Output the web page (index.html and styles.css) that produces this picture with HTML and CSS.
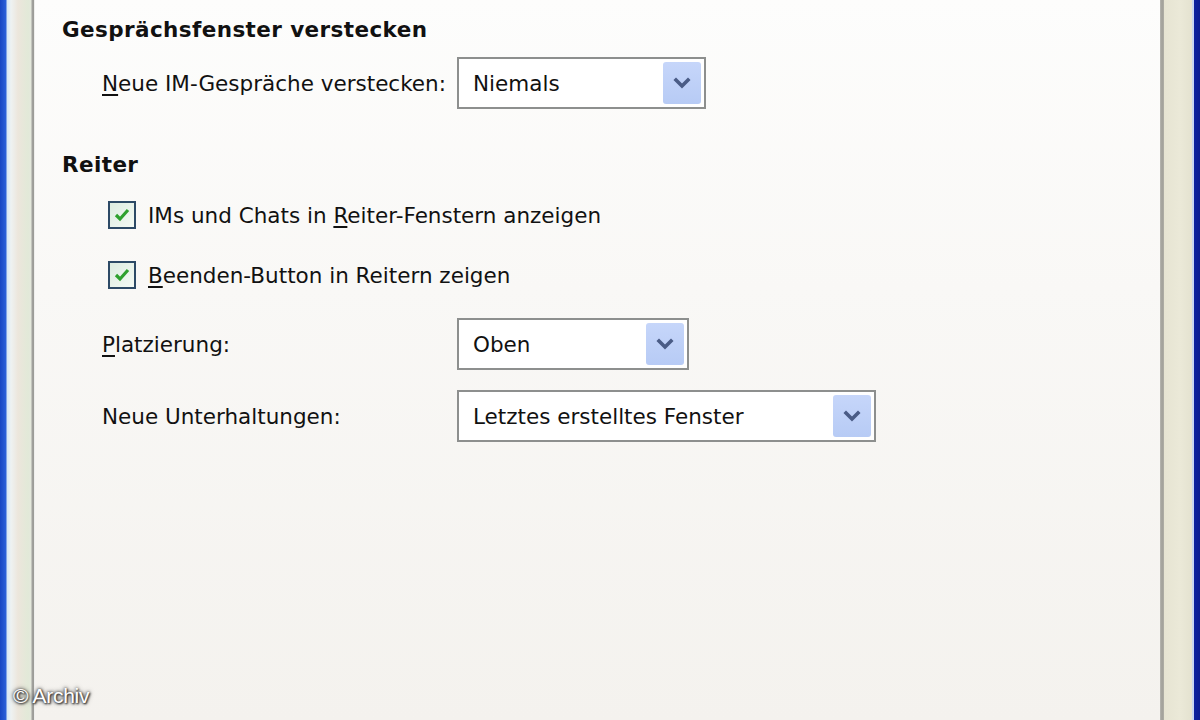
FILE: index.html
```html
<!DOCTYPE html>
<html lang="de">
<head>
<meta charset="utf-8">
<title>Einstellungen</title>
<link rel="stylesheet" href="styles.css">
</head>
<body>
<div class="window">
  <div class="frame-left"></div>
  <div class="panel">
    <div class="heading first">Gesprächsfenster verstecken</div>
    <div class="field row-hide">
      <span class="label"><u>N</u>eue IM-Gespräche verstecken:</span>
      <div class="select w-niemals"><span class="value">Niemals</span><span class="arrow"><svg width="18" height="12" viewBox="0 0 18 12"><path d="M3 3 L9 9 L15 3" fill="none" stroke="#4a5c86" stroke-width="3.6" stroke-linecap="square"/></svg></span></div>
    </div>
    <div class="heading second">Reiter</div>
    <label class="check row-c1"><span class="box"><svg width="18" height="16" viewBox="0 0 18 16"><path d="M3 8 L7 12 L15 3" fill="none" stroke="#2ea12e" stroke-width="3.2"/></svg></span><span>IMs und Chats in <u>R</u>eiter-Fenstern anzeigen</span></label>
    <label class="check row-c2"><span class="box"><svg width="18" height="16" viewBox="0 0 18 16"><path d="M3 8 L7 12 L15 3" fill="none" stroke="#2ea12e" stroke-width="3.2"/></svg></span><span><u>B</u>eenden-Button in Reitern zeigen</span></label>
    <div class="field row-place">
      <span class="label"><u>P</u>latzierung:</span>
      <div class="select w-oben"><span class="value">Oben</span><span class="arrow"><svg width="18" height="12" viewBox="0 0 18 12"><path d="M3 3 L9 9 L15 3" fill="none" stroke="#4a5c86" stroke-width="3.6" stroke-linecap="square"/></svg></span></div>
    </div>
    <div class="field row-new">
      <span class="label">Neue Unterhaltungen:</span>
      <div class="select w-fenster"><span class="value">Letztes erstelltes Fenster</span><span class="arrow"><svg width="18" height="12" viewBox="0 0 18 12"><path d="M3 3 L9 9 L15 3" fill="none" stroke="#4a5c86" stroke-width="3.6" stroke-linecap="square"/></svg></span></div>
    </div>
  </div>
  <div class="frame-right"></div>
  <div class="watermark">© Archiv</div>
</div>
</body>
</html>
```
FILE: styles.css
```css
html, body {
  margin: 0;
  padding: 0;
  width: 1200px;
  height: 720px;
  overflow: hidden;
}
body {
  font-family: "DejaVu Sans", sans-serif;
  font-size: 21.5px;
  color: #111;
}
.window {
  position: relative;
  display: flex;
  width: 1200px;
  height: 720px;
}
.frame-left {
  width: 35px;
  flex: none;
  background: linear-gradient(to right,
    #1645c2 0px, #2b60d9 6px, #d6e6f4 7px, #eef2f2 11px,
    #ece6dc 18px, #e2e9d8 28px, #e4e8dc 31px,
    #a2a29e 32px, #9a9a96 34px, #eeeeec 34px, #eeeeec 35px);
}
.frame-right {
  width: 40px;
  flex: none;
  background: linear-gradient(to right,
    #b8b8b2 0px, #a09f98 2px, #b0afa6 4px, #e6e4d2 4px,
    #ebe9d8 20px, #e4e2d0 32px, #c8d6f2 32px, #c8d6f2 34px,
    #0c22a0 34px, #0a1c92 40px);
}
.panel {
  flex: 1;
  padding-left: 27px;
  background: linear-gradient(to bottom, #fdfdfc 0%, #f9f8f6 40%, #f4f2ee 100%);
}
.heading {
  font-weight: bold;
  line-height: 30px;
  height: 30px;
  letter-spacing: 0.4px;
}
.heading.first { margin-top: 15px; }
.heading.second { margin-top: 41px; }
.field {
  display: flex;
  align-items: center;
  padding-left: 40px;
  height: 52px;
}
.label {
  width: 355px;
  flex: none;
  white-space: nowrap;
}
.row-hide { margin-top: 12px; }
.row-place { margin-top: 29px; }
.row-new { margin-top: 20px; }
.select {
  box-sizing: border-box;
  height: 52px;
  border: 2px solid #8d8f8e;
  background: #fff;
  display: flex;
  align-items: center;
  padding: 3px 3px 3px 14px;
}
.select .value {
  flex: 1;
  white-space: nowrap;
}
.w-niemals { width: 249px; }
.w-oben { width: 232px; }
.w-fenster { width: 419px; }
.arrow {
  width: 38px;
  height: 42px;
  flex: none;
  border-radius: 3px;
  background: linear-gradient(to bottom, #c6d6fa, #b7cbf5);
  display: flex;
  align-items: center;
  justify-content: center;
}
.check {
  display: flex;
  align-items: center;
  height: 28px;
  padding-left: 46px;
}
.row-c1 { margin-top: 21px; }
.row-c2 { margin-top: 32px; }
.box {
  box-sizing: border-box;
  width: 28px;
  height: 28px;
  flex: none;
  border: 2px solid #2d4a66;
  background: linear-gradient(135deg, #dcebe0, #f4faf4);
  display: flex;
  align-items: center;
  justify-content: center;
  margin-right: 12px;
}
u { text-decoration-thickness: 2px; text-underline-offset: 3px; }
.watermark {
  position: absolute;
  left: 13px;
  top: 684px;
  font-family: "Liberation Sans", Arial, sans-serif;
  font-size: 21px;
  color: #fff;
  text-shadow: 0 0 3px #333, 0 0 5px #555, 1px 1px 2px #222;
  letter-spacing: -0.3px;
}
```
